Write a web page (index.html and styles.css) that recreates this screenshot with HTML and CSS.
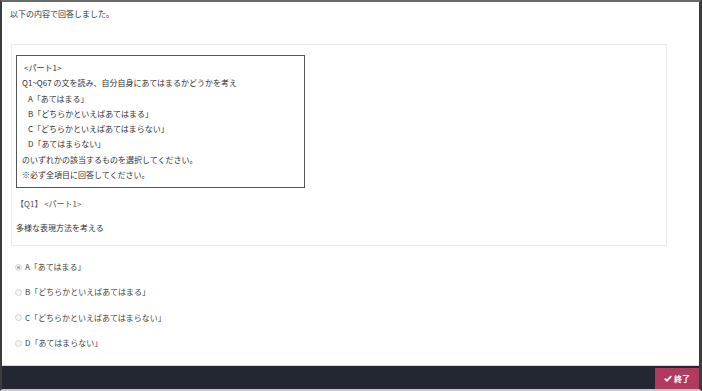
FILE: index.html
```html
<!DOCTYPE html>
<html lang="ja">
<head>
    <meta charset="UTF-8">
    <meta name="viewport" content="width=device-width, initial-scale=1.0">
    <title>回答確認</title>
    <link rel="stylesheet" href="styles.css">
</head>
<body>
    <div class="frame">
        <div class="main">
            <p class="notice">以下の内容で回答しました。</p>

            <div class="panel">
                <div class="instructions">
                    <p>&lt;パート1&gt;</p>
                    <p class="lead">Q1~Q67 の文を読み、自分自身にあてはまるかどうかを考え</p>
                    <p class="choice">A「あてはまる」</p>
                    <p class="choice">B「どちらかといえばあてはまる」</p>
                    <p class="choice">C「どちらかといえばあてはまらない」</p>
                    <p class="choice">D「あてはまらない」</p>
                    <p class="lead">のいずれかの該当するものを選択してください。</p>
                    <p class="lead">※必ず全項目に回答してください。</p>
                </div>
                <p class="q-title">【Q1】 &lt;パート1&gt;</p>
                <p class="q-text">多様な表現方法を考える</p>
            </div>

            <ul class="options">
                <li><span class="radio checked"></span>A「あてはまる」</li>
                <li><span class="radio"></span>B「どちらかといえばあてはまる」</li>
                <li><span class="radio"></span>C「どちらかといえばあてはまらない」</li>
                <li><span class="radio"></span>D「あてはまらない」</li>
            </ul>
        </div>

        <div class="footer">
            <button type="button" class="btn-finish">
                <svg width="8" height="7" viewBox="0 0 8 7"><path d="M0.8 3.6 L3 5.7 L7.2 1.2" fill="none" stroke="#fff" stroke-width="1.8"/></svg>
                終了
            </button>
        </div>
    </div>
</body>
</html>
```

FILE: styles.css
```css
* {
    margin: 0;
    padding: 0;
    box-sizing: border-box;
}

body {
    font-family: "Noto Sans CJK JP", "Liberation Sans", sans-serif;
    font-size: 8px;
    color: #333;
    background: #fff;
}

.frame {
    width: 702px;
    height: 391px;
    display: flex;
    flex-direction: column;
    border-top: 2px solid #6a6a6a;
    border-left: 2px solid #3c3c3c;
    border-right: 3px solid #3c3c3c;
    border-bottom: 2px solid #c8c8c8;
}

.main {
    flex: 1;
    padding: 6px 0 0 8px;
}

.notice {
    line-height: 12px;
    height: 12px;
}

.panel {
    margin: 24px 32px 0 1px;
    border: 1px solid #ebebeb;
    padding: 10px 4px 11px 4px;
}

.instructions {
    width: 289px;
    border: 1px solid #555;
    padding: 4px 6px 5px 5px;
}

.instructions p {
    line-height: 15.3px;
    white-space: pre;
}

.instructions p:first-child {
    padding-left: 2px;
}

.instructions .choice {
    padding-left: 6px;
}

.q-title {
    margin-top: 10px;
    line-height: 12px;
    color: #555;
}

.q-text {
    margin-top: 12px;
    line-height: 12px;
}

.options {
    list-style: none;
    padding: 8px 0 0 5px;
}

.options li {
    display: flex;
    align-items: center;
    gap: 3px;
    height: 25.4px;
    line-height: 12px;
    color: #444;
}

.radio {
    width: 7px;
    height: 7px;
    border-radius: 50%;
    border: 1px solid #d4d4d4;
    background: #f6f6f6;
    display: flex;
    align-items: center;
    justify-content: center;
}

.radio.checked::after {
    content: "";
    width: 3px;
    height: 3px;
    border-radius: 50%;
    background: #a8a8a8;
}

.footer {
    height: 24px;
    background: #222731;
    border-top: 1px solid #d8d8d8;
    display: flex;
    justify-content: flex-end;
    align-items: flex-end;
}

.btn-finish {
    width: 44px;
    height: 21px;
    border: none;
    background: #b13b5f;
    color: #fff;
    font-family: inherit;
    font-size: 8px;
    font-weight: bold;
    display: flex;
    align-items: center;
    justify-content: center;
    gap: 2px;
}
```
